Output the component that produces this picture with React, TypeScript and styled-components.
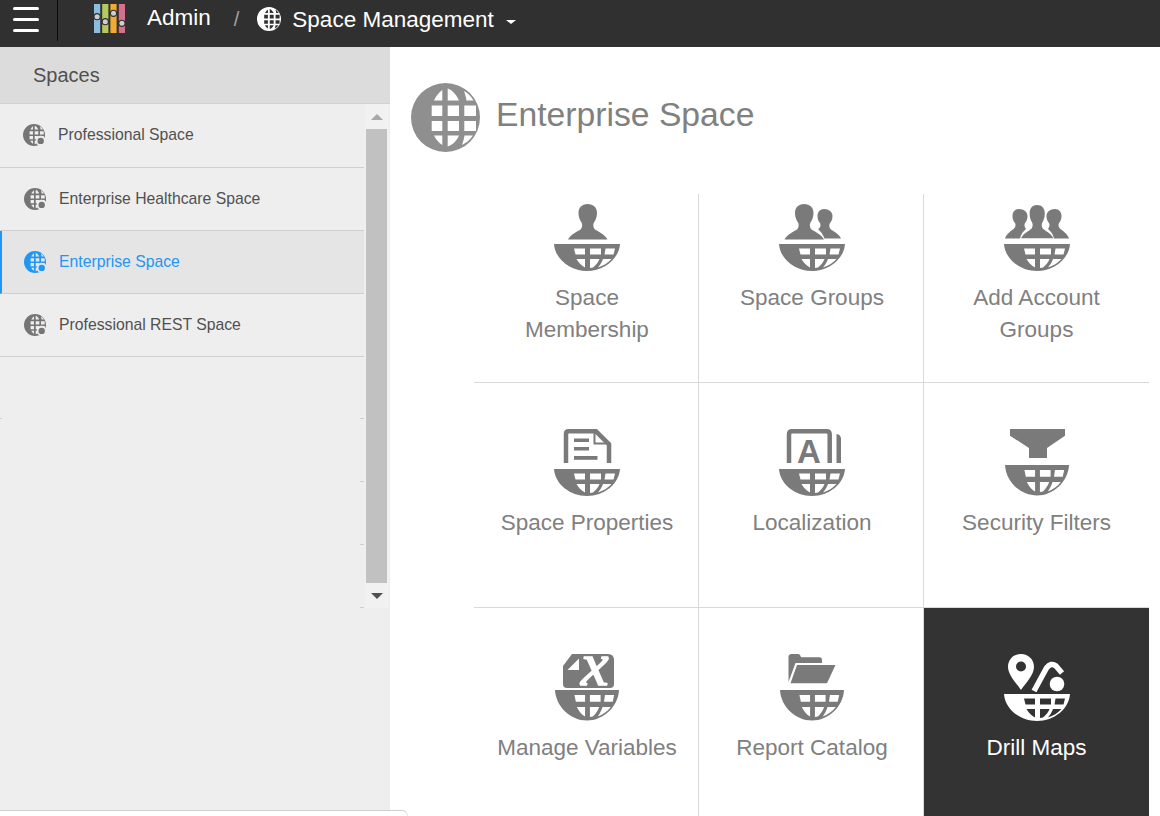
import React from "react";
import styled, { createGlobalStyle } from "styled-components";

const GlobalStyle = createGlobalStyle`
  html, body {
    margin: 0;
    padding: 0;
    height: 816px;
    overflow: hidden;
    background: #fff;
    font-family: "Liberation Sans", Arial, sans-serif;
  }
`;

const Page = styled.div`
  position: relative;
  width: 1160px;
  height: 816px;
  overflow: hidden;
  display: flex;
  flex-direction: column;
`;

const TopBar = styled.header`
  flex: none;
  height: 47px;
  background: #303030;
  display: flex;
  align-items: center;
  color: #fff;
  font-size: 22.5px;
`;

const MenuButton = styled.div`
  width: 57px;
  height: 47px;
  box-sizing: border-box;
  padding: 7px 18px 0 13px;
  display: flex;
  flex-direction: column;
  gap: 8px;
  span {
    display: block;
    height: 3px;
    border-radius: 2px;
    background: #fff;
  }
`;

const MenuDivider = styled.div`
  width: 1px;
  height: 41px;
  align-self: flex-start;
  background: #0c0c0c;
`;

const Logo = styled.svg`
  width: 32px;
  height: 29px;
  margin: 0 21px 10px 36px;
`;

const Crumb = styled.span`
  margin-bottom: 12px;
`;

const Slash = styled.span`
  margin: 0 18px 9px 23px;
  font-size: 20px;
  color: #a3a3a3;
`;

const CrumbGlobe = styled.div`
  width: 24px;
  height: 24px;
  margin: 0 11px 9px 0;
`;

const CrumbTitle = styled.span`
  margin-bottom: 8px;
`;

const Caret = styled.span`
  width: 0;
  height: 0;
  margin: 0 0 4px 12px;
  border-left: 5.5px solid transparent;
  border-right: 5.5px solid transparent;
  border-top: 4.5px solid #fff;
`;

const Body = styled.div`
  flex: 1;
  display: flex;
  min-height: 0;
`;

const Sidebar = styled.aside`
  flex: none;
  width: 390px;
  background: #eee;
  display: flex;
  flex-direction: column;
`;

const SidebarTitle = styled.div`
  height: 57px;
  box-sizing: border-box;
  padding: 16px 0 0 33px;
  background: #dcdcdc;
  border-bottom: 1px solid #d2d2d2;
  font-size: 20px;
  line-height: 24px;
  color: #505050;
  flex: none;
`;

const SidebarBody = styled.div`
  display: flex;
  align-items: flex-start;
`;

const SpaceList = styled.div`
  width: 365px;
  flex: none;
`;

const SpaceRow = styled.div<{ $active?: boolean }>`
  height: 63px;
  box-sizing: border-box;
  display: flex;
  align-items: center;
  gap: 13px;
  padding-left: ${(p) => (p.$active ? "22px" : "24px")};
  width: 364px;
  font-size: 15.75px;
  color: ${(p) => (p.$active ? "#2196f3" : "#505050")};
  background: ${(p) => (p.$active ? "#e5e5e5" : "transparent")};
  border-left: ${(p) => (p.$active ? "2px solid #2196f3" : "0")};
  border-bottom: 1px solid #cfcfcf;
  &:first-child {
    height: 64px;
    padding-left: 23px;
    padding-bottom: 2px;
  }
`;

const RowGlobe = styled.div`
  width: 22px;
  height: 22px;
  flex: none;
`;

const GhostRow = styled.div<{ $leftTick?: boolean }>`
  height: 63px;
  width: 364px;
  background:
    linear-gradient(#cfcfcf, #cfcfcf) right bottom / 4px 1px no-repeat
    ${(p) => (p.$leftTick ? ", linear-gradient(#cfcfcf, #cfcfcf) left bottom / 2px 1px no-repeat" : "")};
  &:nth-child(5) {
    height: 62px;
  }
`;

const ScrollTrack = styled.div`
  width: 24px;
  height: 504px;
  flex: none;
  background: #f1f1f1;
  display: flex;
  flex-direction: column;
  align-items: center;
`;

const ScrollArrow = styled.div<{ $down?: boolean }>`
  height: 25px;
  flex: none;
  display: flex;
  align-items: center;
  &::before {
    content: "";
    width: 0;
    height: 0;
    border-left: 6px solid transparent;
    border-right: 6px solid transparent;
    ${(p) =>
      p.$down
        ? "border-top: 6px solid #505050;"
        : "border-bottom: 6px solid #a8a8a8;"}
  }
`;

const ScrollThumb = styled.div`
  width: 21px;
  flex: 1;
  margin-right: 1px;
  background: #c1c1c1;
`;

const Main = styled.main`
  flex: 1;
  padding: 36px 0 0 21px;
  min-width: 0;
`;

const TitleRow = styled.div`
  display: flex;
  align-items: center;
  gap: 16px;
  height: 69px;
  font-size: 33.7px;
  color: #808080;
`;

const TitleText = styled.h1`
  margin: 0 0 6px;
  font-size: inherit;
  font-weight: 400;
`;

const TitleGlobe = styled.div`
  width: 69px;
  height: 69px;
`;

const ToolGrid = styled.div`
  margin: 42px 0 0 63px;
  width: 675px;
  display: grid;
  grid-template-columns: repeat(3, 225px);
  grid-template-rows: 189px 225px 225px;
`;

const ToolCell = styled.div<{ $first?: boolean; $dark?: boolean; $right?: boolean; $bottom?: boolean }>`
  box-sizing: border-box;
  padding-top: ${(p) => (p.$first ? "10px" : "46px")};
  padding-left: ${(p) => (p.$right ? "2px" : "0")};
  display: flex;
  flex-direction: column;
  align-items: center;
  gap: 9.5px;
  background: ${(p) => (p.$dark ? "#333" : "#fff")};
  color: ${(p) => (p.$dark ? "#fff" : "#7a7a7a")};
  border-right: ${(p) => (p.$right ? "1px solid #d9d9d9" : "0")};
  border-bottom: ${(p) => (p.$bottom ? "1px solid #d9d9d9" : "0")};
`;

const ToolIcon = styled.svg`
  width: 66px;
  height: 68px;
  flex: none;
  overflow: visible;
`;

const ToolLabel = styled.div<{ $dark?: boolean }>`
  max-width: 184px;
  text-align: center;
  font-size: 22.5px;
  line-height: 32px;
  color: ${(p) => (p.$dark ? "#fff" : "#808080")};
`;

const BottomEdge = styled.div`
  position: absolute;
  left: 0;
  bottom: 0;
  width: 407px;
  height: 5px;
  background: #fff;
  border-top: 1px solid #cfcfcf;
  border-right: 1px solid #e4e4e4;
  border-top-right-radius: 6px;
`;

const globePath =
  "M34.5 0A34.5 34.5 0 1 0 34.5 69A34.5 34.5 0 1 0 34.5 0Z" +
  "M31.3 7V17.5H23C25 13 28 9.5 31.3 7Z" +
  "M36.7 5.5C41 7 45 11 48 17.5H36.7Z" +
  "M53 8C57 10 60 13.5 62.5 17.5H55.5C55 14 54 11 53 8Z" +
  "M20.7 22.5H31.3V33H20.7Z" +
  "M36.7 22.5H48V33H36.7Z" +
  "M53.3 22.5H65V33H53.3Z" +
  "M20.7 38H31.3V48H20.7Z" +
  "M36.7 38H48V48H36.7Z" +
  "M53.3 38H65V48H53.3Z" +
  "M23 52.5H31.3V62C28 60 25 56.5 23 52.5Z" +
  "M36.7 52.5H48C46 57 42 62 36.7 63.5Z" +
  "M53.5 52.5H62C59 57 55 60 51 62C52 59 53 56 53.5 52.5Z";

const Globe: React.FC<{ color: string; dotRing?: string }> = ({ color, dotRing }) => (
  <svg viewBox="0 0 69 69" width="100%" height="100%" style={{ display: "block" }}>
    <path d={globePath} fill={color} fillRule="evenodd" />
    {dotRing && <circle cx="55.5" cy="53" r="13" fill={color} stroke={dotRing} strokeWidth="6" />}
  </svg>
);

const basketPath =
  "M0 0H66C65 15 50 27 33 27C16 27 1 15 0 0Z" +
  "M20 4.5H31V10.5H21.5Z" +
  "M36 4.5H47V10.5H36Z" +
  "M51.5 4.5H61L59.5 10.5H50.5Z" +
  "M22.5 15H31V23.5C27 21.5 24.5 18.5 22.5 15Z" +
  "M36 15H45.5C44.5 18 42 21 39 23.5L36 24Z" +
  "M49 15H57.5C54 19 49 22 44 23.5C46 21 48 18 49 15Z";

const Basket: React.FC<{ tall?: boolean }> = ({ tall }) => (
  <path
    d={basketPath}
    fill="currentColor"
    fillRule="evenodd"
    transform={tall ? "translate(1 36) scale(.97 1.13)" : "translate(0 40)"}
  />
);

const personPath =
  "M33.5 0C28 0 24.5 3.5 24.5 9C24.5 13 26 16.5 27.5 18.5C28.5 20 28.5 23 27 25C24.5 27.5 17 29.5 14 35.5H53.5C50.5 29.5 43 27.5 40.5 25C39 23 39 20 40 18.5C41.5 16.5 43 13 43 9C43 3.5 39.5 0 33.5 0Z";

const sidePersonPath =
  "M15 5C11 5 8.5 8 8.5 12C8.5 15 9.5 17.5 11 19C12 21 11.5 23 10 24.5C7.5 27 3 29 1 34.5H16C17 30 19 27.5 22 25C20.5 23 20 21 21 19C22.5 17.5 23.5 15 23.5 12C23.5 8 20 5 15 5Z";

const icons: Record<string, React.ReactNode> = {
  membership: (
    <>
      <path d={personPath} fill="currentColor" />
      <Basket />
    </>
  ),
  groups: (
    <>
      <path d={personPath} fill="currentColor" transform="translate(-8.5 0)" />
      <path
        d="M45 5C41 5 38.5 8 38.5 12C38.5 15 39.5 17.5 41 19C42 21 41.5 23 40 24.5L39 25C41 27 44 30 45.5 34.5H62C60 29.5 54 27.5 51.5 25C50 23 50 21 51 19C52.5 17.5 53.5 15 53.5 12C53.5 8 50 5 45 5Z"
        fill="currentColor"
      />
      <Basket />
    </>
  ),
  accounts: (
    <>
      <path d={sidePersonPath} fill="currentColor" />
      <path d={sidePersonPath} fill="currentColor" transform="translate(66 0) scale(-1 1)" />
      <path d={personPath} fill="currentColor" transform="translate(33 1) scale(.82 .94) translate(-33.5 0)" />
      <Basket />
    </>
  ),
  properties: (
    <>
      <path d="M12 34V4.8Q12 2.3 14.5 2.3H42L55 15.3V34" fill="none" stroke="currentColor" strokeWidth="4.5" />
      <path d="M40.5 3V14.5H54" fill="none" stroke="currentColor" strokeWidth="2" />
      <rect x="20" y="9.5" width="15" height="3.5" fill="currentColor" />
      <rect x="20" y="18" width="15" height="3.5" fill="currentColor" />
      <rect x="20" y="27" width="23.5" height="3.8" fill="currentColor" />
      <Basket />
    </>
  ),
  localization: (
    <>
      <path d="M10 34V5.5Q10 2.3 13.2 2.3H47.5Q50.7 2.3 50.7 5.5V34" fill="none" stroke="currentColor" strokeWidth="4.5" />
      <path d="M57.5 5Q62 5.5 62 10V34H57.5Z" fill="currentColor" />
      <text x="30" y="33.7" textAnchor="middle" fontFamily="Liberation Sans" fontWeight="700" fontSize="33" fill="currentColor">
        A
      </text>
      <Basket />
    </>
  ),
  filters: (
    <>
      <path d="M6 0H61V6.7L43 19V29H25V19L6 6.7Z" fill="currentColor" />
      <Basket tall />
    </>
  ),
  variables: (
    <>
      <path d="M9 12L18 0H54Q60 0 60 6V30Q60 34 56 34H13Q9 34 9 30Z" fill="currentColor" />
      <path d="M13.5 16L25 4.5V16Z" fill="#fff" />
      <text
        x="27"
        y="31"
        fontFamily="Liberation Serif"
        fontStyle="italic"
        fontSize="62"
        fill="#fff"
        stroke="#fff"
        strokeWidth="1.6"
      >
        x
      </text>
      <Basket tall />
    </>
  ),
  catalog: (
    <>
      <path
        d="M9.5 28V3Q9.5 0 12.5 0H19Q21 0 22 3.3H40.5Q43 3.3 43 6V9H16.5Z"
        fill="currentColor"
      />
      <path d="M18 11H56.5L48 29.3H11.5Z" fill="currentColor" />
      <Basket tall />
    </>
  ),
  drill: (
    <>
      <path
        d="M17 0C9.5 0 4 5.5 4 13C4 21 13 30 17 36C21 30 30 21 30 13C30 5.5 24.5 0 17 0ZM17 7.5A5 5 0 1 1 17 17.5A5 5 0 1 1 17 7.5Z"
        fill="currentColor"
        fillRule="evenodd"
      />
      <path d="M30 37L42.5 14Q47 8 52 12L58 19" fill="none" stroke="currentColor" strokeWidth="5.5" />
      <circle cx="53" cy="30" r="7.3" fill="currentColor" />
      <Basket />
    </>
  ),
};

const tools = [
  { label: "Space Membership", icon: "membership" },
  { label: "Space Groups", icon: "groups" },
  { label: "Add Account Groups", icon: "accounts" },
  { label: "Space Properties", icon: "properties" },
  { label: "Localization", icon: "localization" },
  { label: "Security Filters", icon: "filters" },
  { label: "Manage Variables", icon: "variables" },
  { label: "Report Catalog", icon: "catalog" },
  { label: "Drill Maps", icon: "drill", dark: true },
];

const spaces = [
  "Professional Space",
  "Enterprise Healthcare Space",
  "Enterprise Space",
  "Professional REST Space",
];

const logoBars = [
  { x: 0, color: "#8cbce0", knob: 12.7 },
  { x: 8.2, color: "#b5c95e", knob: 17.7 },
  { x: 16.4, color: "#f0ac30", knob: 9.3 },
  { x: 24.8, color: "#d5708a", knob: 19.3 },
];

const App: React.FC = () => {
  return (
    <Page>
      <GlobalStyle />
      <TopBar>
        <MenuButton>
          <span />
          <span />
          <span />
        </MenuButton>
        <MenuDivider />
        <Logo viewBox="0 0 32 29">
          {logoBars.map((bar) => (
            <g key={bar.x}>
              <rect x={bar.x} width="6.2" height="29" fill={bar.color} />
              <circle cx={bar.x + 3.1} cy={bar.knob} r="3.6" fill="#303030" />
              <circle cx={bar.x + 3.1} cy={bar.knob} r="2.5" fill="#cfcfcf" />
            </g>
          ))}
        </Logo>
        <Crumb>Admin</Crumb>
        <Slash>/</Slash>
        <CrumbGlobe>
          <Globe color="#fff" />
        </CrumbGlobe>
        <CrumbTitle>Space Management</CrumbTitle>
        <Caret />
      </TopBar>
      <Body>
        <Sidebar>
          <SidebarTitle>Spaces</SidebarTitle>
          <SidebarBody>
            <SpaceList>
              {spaces.map((name) => {
                const active = name === "Enterprise Space";
                return (
                  <SpaceRow key={name} $active={active}>
                    <RowGlobe>
                      <Globe color={active ? "#2196f3" : "#757575"} dotRing={active ? "#e5e5e5" : "#eee"} />
                    </RowGlobe>
                    {name}
                  </SpaceRow>
                );
              })}
              <GhostRow $leftTick />
              <GhostRow />
              <GhostRow />
              <GhostRow />
            </SpaceList>
            <ScrollTrack>
              <ScrollArrow />
              <ScrollThumb />
              <ScrollArrow $down />
            </ScrollTrack>
          </SidebarBody>
        </Sidebar>
        <Main>
          <TitleRow>
            <TitleGlobe>
              <Globe color="#8f8f8f" />
            </TitleGlobe>
            <TitleText>Enterprise Space</TitleText>
          </TitleRow>
          <ToolGrid>
            {tools.map((tool, i) => (
              <ToolCell
                key={tool.label}
                $first={i < 3}
                $dark={tool.dark}
                $right={i % 3 !== 2}
                $bottom={i < 6}
              >
                <ToolIcon viewBox="0 0 66 68">{icons[tool.icon]}</ToolIcon>
                <ToolLabel $dark={tool.dark}>{tool.label}</ToolLabel>
              </ToolCell>
            ))}
          </ToolGrid>
        </Main>
      </Body>
      <BottomEdge />
    </Page>
  );
};

export default App;
